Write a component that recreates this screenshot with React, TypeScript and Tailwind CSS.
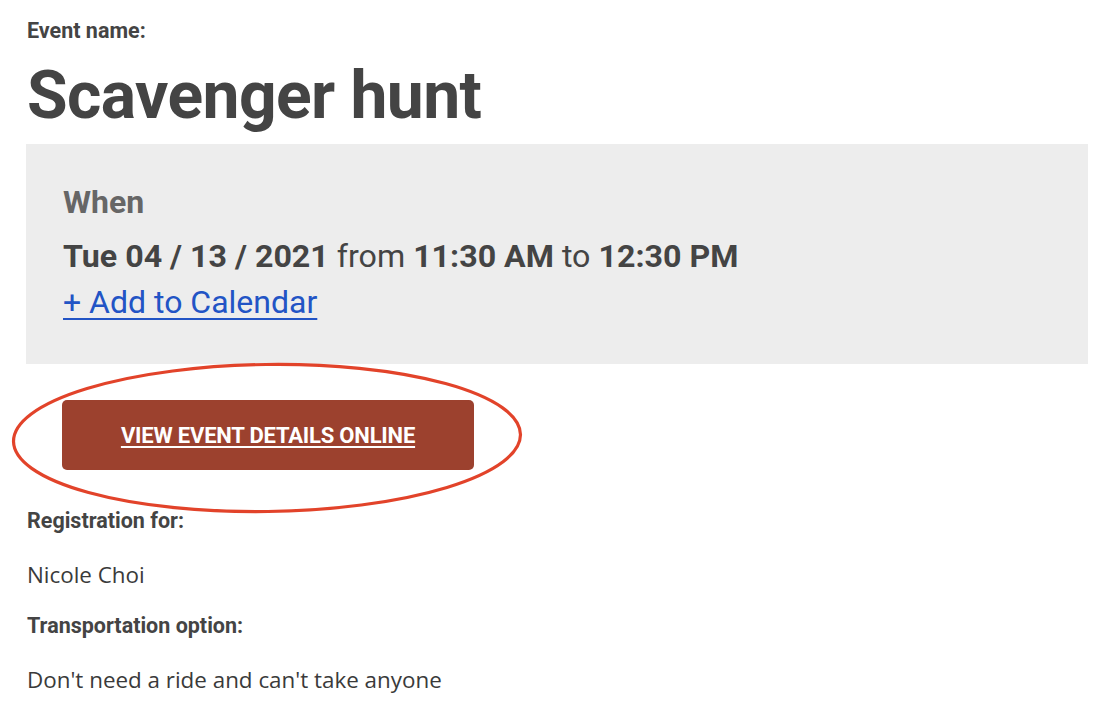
import React from "react";

const heading = "font-['Roboto',sans-serif]";
const body = "font-['Open_Sans',sans-serif]";

// Label shown above each field
const FieldLabel = ({ children }: { children: React.ReactNode }) => (
  <p className={`${heading} text-[21.5px] font-bold leading-[24px] text-[#444444]`}>
    {children}
  </p>
);

export default function App() {
  return (
    <div className="w-[1118px] h-[710px] bg-white overflow-hidden text-[#444444]">
      <div className="pl-[27px] pr-[30px] pt-[19px]">
        <FieldLabel>Event name:</FieldLabel>

        <h1 className={`${heading} mt-[14px] text-[66px] font-bold leading-[78px] tracking-[-0.6px] text-[#444444]`}>
          Scavenger hunt
        </h1>

        {/* When box */}
        <div className="mt-[9px] -ml-[1px] bg-[#ededed] pl-[37px] pt-[38px] pb-[42px]">
          <p className={`${heading} text-[32px] font-bold leading-[40px] text-[#666666]`}>When</p>
          <p className={`${heading} mt-[14px] text-[32.2px] leading-[40px] text-[#444444]`}>
            <span className="font-bold">Tue 04 / 13 / 2021</span> from{" "}
            <span className="font-bold">11:30 AM</span> to{" "}
            <span className="font-bold">12:30 PM</span>
          </p>
          <p className={`${heading} mt-[6px] text-[32px] leading-[40px]`}>
            <a href="#" className="text-[#2254c5] underline decoration-2 underline-offset-[5px]">
              + Add to Calendar
            </a>
          </p>
        </div>

        {/* Button with hand-drawn highlight */}
        <div className="relative mt-[36px] mb-[39px] pl-[35px]">
          <a
            href="#"
            className={`${heading} flex h-[70px] w-[412px] items-center justify-center rounded-[5px] bg-[#9c412e] text-[22px] font-bold tracking-[-0.2px] text-white underline decoration-2 underline-offset-[3px]`}
          >
            VIEW EVENT DETAILS ONLINE
          </a>
          <svg
            className="pointer-events-none absolute left-[-27px] top-[-38px]"
            width="540"
            height="156"
            viewBox="0 0 540 156"
          >
            <ellipse
              cx="267"
              cy="76"
              rx="253.5"
              ry="73.5"
              fill="none"
              stroke="#e2432a"
              strokeWidth="3.2"
              transform="rotate(-0.8 267 76)"
            />
          </svg>
        </div>

        <FieldLabel>Registration for:</FieldLabel>
        <p className={`${body} mt-[27px] text-[22.4px] leading-[30px] text-[#3a3a3a]`}>Nicole Choi</p>
        <div className="mt-[24px]">
          <FieldLabel>Transportation option:</FieldLabel>
        </div>
        <p className={`${body} mt-[27px] text-[22.4px] leading-[30px] text-[#3a3a3a]`}>
          Don't need a ride and can't take anyone
        </p>
      </div>
    </div>
  );
}
